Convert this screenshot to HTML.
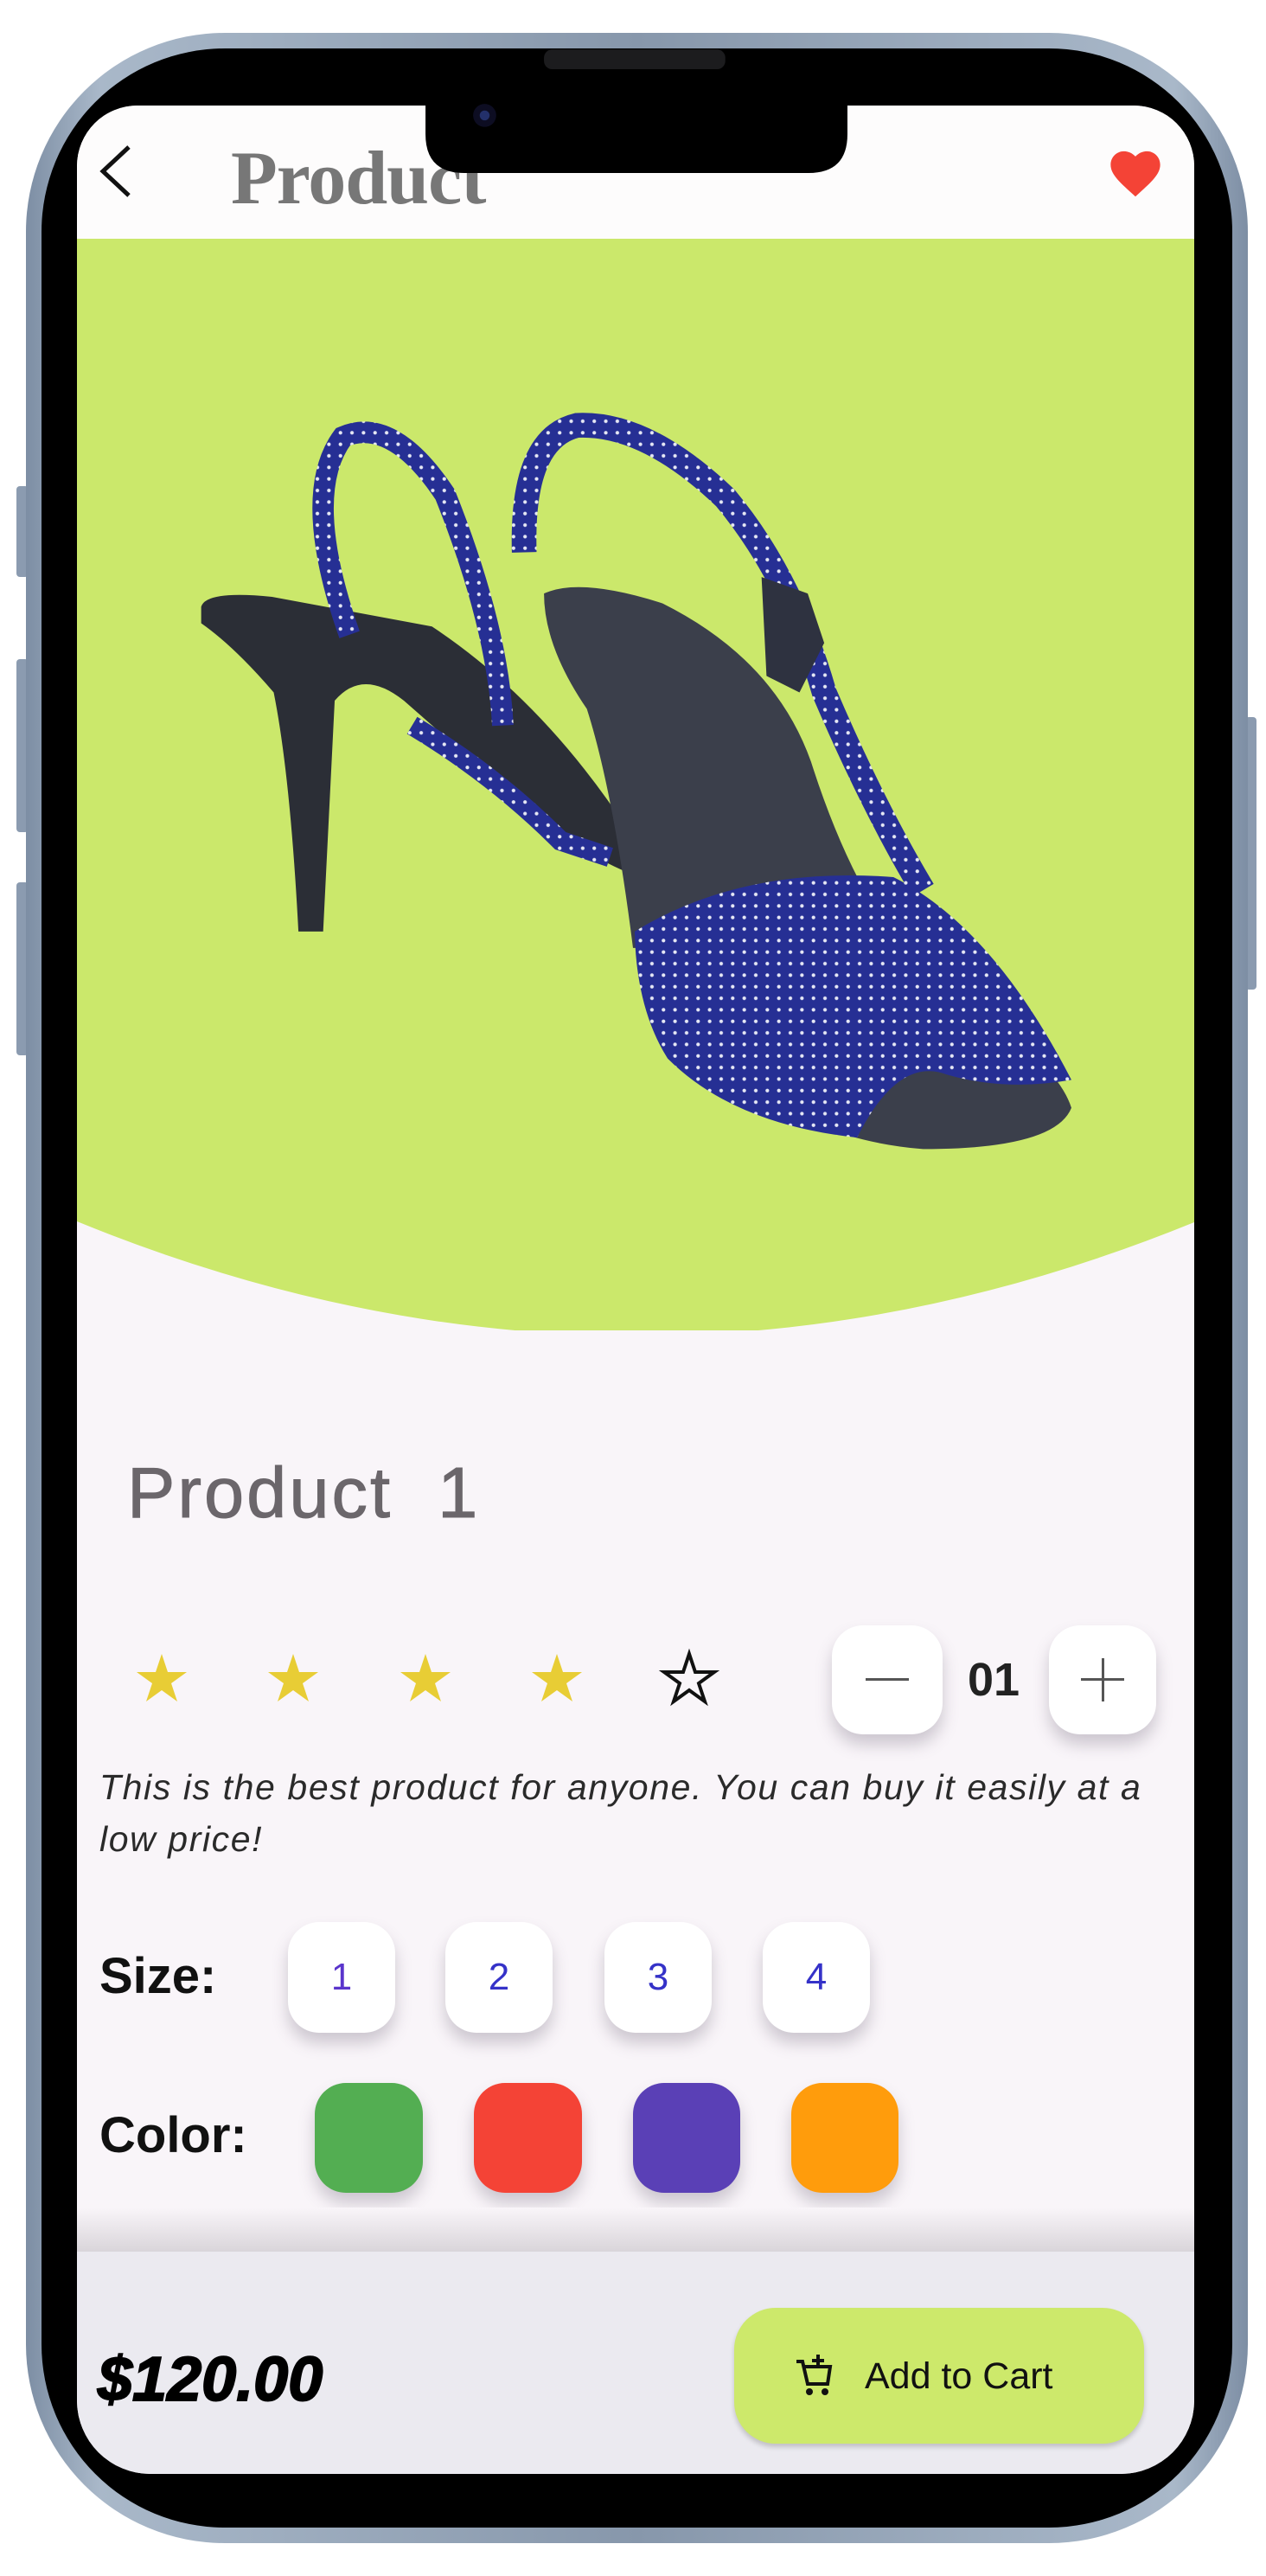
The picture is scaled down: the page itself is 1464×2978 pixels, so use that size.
<!DOCTYPE html>
<html><head><meta charset="utf-8"><style>
html,body{margin:0;padding:0;background:#fff;}
body{width:1464px;height:2978px;position:relative;overflow:hidden;font-family:"Liberation Sans",sans-serif;}
.abs{position:absolute;}
.frame{left:30px;top:38px;width:1413px;height:2902px;border-radius:230px;background:linear-gradient(90deg,#7d8ea4,#a9b8c9 6%,#8797ab 50%,#a9b8c9 94%,#7d8ea4);}
.bez{left:48px;top:56px;width:1377px;height:2866px;border-radius:212px;background:#000;}
.screen{left:89px;top:122px;width:1292px;height:2738px;background:#f9f5f9;overflow:hidden;border-radius:70px 70px 85px 85px;}
.btn{background:#fff;border-radius:36px;box-shadow:0 12px 18px rgba(90,80,100,.28);}
.sw{border-radius:36px;box-shadow:0 12px 18px rgba(90,80,100,.28);}
.num{color:#3532c8;font-size:44px;text-align:center;line-height:128px;}
</style></head><body>
<div class="abs" style="left:19px;top:562px;width:14px;height:105px;background:#8b9bb0;border-radius:4px"></div>
<div class="abs" style="left:19px;top:762px;width:14px;height:200px;background:#8b9bb0;border-radius:4px"></div>
<div class="abs" style="left:19px;top:1020px;width:14px;height:200px;background:#8b9bb0;border-radius:4px"></div>
<div class="abs" style="left:1440px;top:829px;width:13px;height:315px;background:#8b9bb0;border-radius:4px"></div>
<div class="abs frame"></div>
<div class="abs bez"></div>
<div class="abs screen">
  <div class="abs" style="left:0;top:0;width:1292px;height:154px;background:#fdfcfc"></div>
  <svg class="abs" style="left:0;top:154px" width="1292" height="1262" viewBox="0 0 1292 1262">
    <path d="M0,0 H1292 V1137 Q646,1400 0,1136 Z" fill="#cbe86b"/>
  </svg>
  <svg class="abs" style="left:20px;top:40px" width="50" height="70" viewBox="0 0 50 70"><path d="M40,8 L10,36 L40,64" fill="none" stroke="#111" stroke-width="5"/></svg>
  <div class="abs" style="left:178px;top:34px;font-family:'Liberation Serif',serif;font-weight:bold;font-size:88px;color:#777;letter-spacing:-1px">Product</div>
  <svg class="abs" style="left:1190px;top:48px" width="68" height="60" viewBox="0 0 24 22"><path d="M12,21 L10.5,19.6 C5,14.6 1.5,11.4 1.5,7.5 1.5,4.3 4,1.8 7.2,1.8 9,1.8 10.8,2.7 12,4 13.2,2.7 15,1.8 16.8,1.8 20,1.8 22.5,4.3 22.5,7.5 22.5,11.4 19,14.6 13.5,19.6Z" fill="#f44336"/></svg>
  <div class="abs" style="left:58px;top:1562px;font-size:83px;color:#6b666b;letter-spacing:3px;white-space:pre;line-height:1;-webkit-text-stroke:1px #6b666b">Product  1</div>
  <svg class="abs" style="left:0;top:1782px" width="760" height="70" viewBox="0 0 760 70">
    <g fill="#e8cd35">
      <path id="st" d="M98,8 L105,29 L127,29 L109,42 L116,63 L98,50 L80,63 L87,42 L69,29 L91,29Z"/>
      <use href="#st" x="152"/><use href="#st" x="305"/><use href="#st" x="457"/>
    </g>
    <path d="M98,8 L105,29 L127,29 L109,42 L116,63 L98,50 L80,63 L87,42 L69,29 L91,29Z" transform="translate(610,0)" fill="none" stroke="#111" stroke-width="4"/>
  </svg>
  <div class="abs btn" style="left:873px;top:1757px;width:128px;height:126px"><div class="abs" style="left:39px;top:61px;width:50px;height:3px;background:#555"></div></div>
  <div class="abs" style="left:1020px;top:1790px;width:80px;text-align:center;font-size:54px;font-weight:bold;color:#222;line-height:60px">01</div>
  <div class="abs btn" style="left:1124px;top:1757px;width:124px;height:126px"><div class="abs" style="left:37px;top:61px;width:50px;height:3px;background:#555"></div><div class="abs" style="left:61px;top:38px;width:3px;height:50px;background:#555"></div></div>
  <div class="abs" style="left:26px;top:1914px;width:1270px;font-size:41px;font-style:italic;color:#2a2a2a;line-height:60px;letter-spacing:1.6px">This is the best product for anyone. You can buy it easily at a<br>low price!</div>
  <div class="abs" style="left:26px;top:2130px;font-size:58px;font-weight:bold;color:#111;line-height:66px">Size:</div>
  <div class="abs btn num" style="left:244px;top:2100px;width:124px;height:128px;color:#5a35cc">1</div>
  <div class="abs btn num" style="left:426px;top:2100px;width:124px;height:128px">2</div>
  <div class="abs btn num" style="left:610px;top:2100px;width:124px;height:128px">3</div>
  <div class="abs btn num" style="left:793px;top:2100px;width:124px;height:128px">4</div>
  <div class="abs" style="left:26px;top:2314px;font-size:58px;font-weight:bold;color:#111;line-height:66px">Color:</div>
  <div class="abs sw" style="left:275px;top:2286px;width:125px;height:127px;background:#53ae52"></div>
  <div class="abs sw" style="left:459px;top:2286px;width:125px;height:127px;background:#f44336"></div>
  <div class="abs sw" style="left:643px;top:2286px;width:124px;height:127px;background:#5a40b6"></div>
  <div class="abs sw" style="left:826px;top:2286px;width:124px;height:127px;background:#ff9c0c"></div>
  <div class="abs" style="left:0;top:2430px;width:1292px;height:51px;background:linear-gradient(#f9f5f9,#d9d5da)"></div>
  <div class="abs" style="left:0;top:2481px;width:1292px;height:260px;background:#ebeaf0"></div>
  <div class="abs" style="left:24px;top:2584px;font-size:72px;font-weight:bold;font-style:italic;color:#000;letter-spacing:0px;line-height:90px;-webkit-text-stroke:2px #000">$120.00</div>
  <div class="abs" style="left:760px;top:2546px;width:474px;height:157px;border-radius:48px;background:#cde96b;box-shadow:0 4px 6px rgba(0,0,0,.18)"></div>
  <svg class="abs" style="left:830px;top:2598px" width="44" height="52" viewBox="0 0 44 52"><g fill="none" stroke="#111" stroke-width="4"><path d="M2,10 H9 L15,36 H38 L41,16 H12"/><path d="M27,2 V16 M20,9 H34"/></g><circle cx="17" cy="45" r="4" fill="#111"/><circle cx="35" cy="45" r="4" fill="#111"/></svg>
  <div class="abs" style="left:911px;top:2600px;font-size:43px;color:#111;line-height:50px">Add to Cart</div>
</div>
<svg class="abs" style="left:0;top:0" width="1464" height="2978" viewBox="0 0 768 1562.5">
  <defs><pattern id="dots" width="7" height="7" patternUnits="userSpaceOnUse"><rect width="7" height="7" fill="#262f94"/><circle cx="3.5" cy="3.5" r="1.1" fill="#e6e8f5"/></pattern></defs>
  <path d="M122,368 Q125,358 165,362 L262,380 Q330,425 382,505 L378,528 Q342,512 310,482 L245,425 Q220,405 203,425 L196,565 L181,565 Q176,470 166,420 Q142,392 122,378 Z" fill="#2b2e36"/>
  <path d="M212,385 Q182,300 208,265 Q238,252 270,300 Q302,380 305,440" fill="none" stroke="url(#dots)" stroke-width="13"/>
  <path d="M250,440 Q300,470 340,510 L370,520" fill="none" stroke="url(#dots)" stroke-width="12"/>
  <path d="M330,360 Q352,350 402,366 Q470,400 492,462 Q520,550 562,592 Q640,640 650,672 Q640,697 560,697 Q500,692 462,662 Q422,612 402,565 L398,575 L384,575 Q372,480 356,430 Q330,392 330,360 Z" fill="#3b3f4b"/>
  <path d="M318,335 Q316,266 350,258 Q392,256 440,302 Q480,350 500,420 Q530,490 560,540" fill="none" stroke="url(#dots)" stroke-width="15"/>
  <path d="M462,350 L490,360 L500,390 L485,420 L465,410 Z" fill="#2e3240"/>
  <path d="M385,565 Q450,525 542,532 Q602,562 650,655 Q610,662 575,652 Q545,640 520,690 Q445,682 405,642 Q386,612 385,565 Z" fill="url(#dots)"/>
  <path d="M492,100 H980 V155 Q980,200 935,200 H537 Q492,200 492,155 Z" transform="scale(0.5246)" fill="#000"/>
  <rect x="330" y="30" width="110" height="12" rx="5" fill="#1c1c1e"/>
  <circle cx="294" cy="70" r="7" fill="#0d0d22"/><circle cx="294" cy="70" r="3" fill="#23306a"/>
</svg>
</body></html>
